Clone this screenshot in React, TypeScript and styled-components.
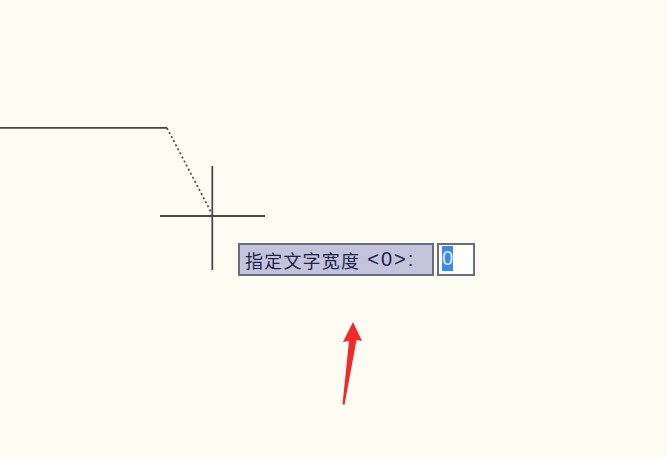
import React from "react";
import styled, { createGlobalStyle } from "styled-components";

const Global = createGlobalStyle`
  html, body { margin: 0; padding: 0; background: #fcfcf2; }
  #root { width: 667px; height: 457px; }
`;

const Canvas = styled.div`
  position: relative;
  width: 667px;
  height: 457px;
  background: #fcfcf2;
  overflow: hidden;
  font-family: "Noto Sans CJK SC", "Noto Sans", sans-serif;
`;

const Drawing = styled.svg`
  position: absolute;
  left: 0;
  top: 0;
`;

const Prompt = styled.div`
  position: absolute;
  left: 238px;
  top: 243px;
  display: flex;
  gap: 3px;
  height: 33px;
`;

const Label = styled.div`
  box-sizing: border-box;
  width: 196px;
  height: 33px;
  background: #c3c3dc;
  border: 2px solid #6c6c7c;
  display: flex;
  align-items: center;
  padding-left: 5px;
  color: #22224e;
  font-size: 18px;
  letter-spacing: 1.2px;
  white-space: nowrap;
`;

const Latin = styled.span`
  font-family: "Liberation Sans", Arial, sans-serif;
  font-size: 20px;
  margin-left: 7px;
  letter-spacing: 2px;
`;

const Field = styled.div`
  box-sizing: border-box;
  width: 38px;
  height: 33px;
  background: #ffffff;
  border: 2px solid #6c6c7c;
  padding: 1px 0 0 3px;
  display: flex;
`;

const Selected = styled.span`
  display: inline-flex;
  align-items: center;
  justify-content: center;
  width: 11px;
  height: 25px;
  background: #3a8ae6;
  color: #d8ecff;
  font-family: "Liberation Sans", Arial, sans-serif;
  font-size: 20px;
`;

export default function App() {
  return (
    <>
      <Global />
      <Canvas>
        <Drawing width="667" height="457" viewBox="0 0 667 457">
          <line x1="0" y1="127.8" x2="167" y2="127.8" stroke="#444" strokeWidth="1.8" />
          <line
            x1="167"
            y1="128"
            x2="212"
            y2="214"
            stroke="#4a4a4a"
            strokeWidth="1.7"
            strokeDasharray="2 2.6"
          />
          <line x1="160" y1="216" x2="265" y2="216" stroke="#4a4a4a" strokeWidth="1.8" />
          <line x1="212.3" y1="166" x2="212.3" y2="270" stroke="#4a4a4a" strokeWidth="1.8" />
          <polygon
            points="353,322 362,341 356.5,340 344.5,405 342.5,404 349,341 343,342"
            fill="#f02a2a"
          />
        </Drawing>
        <Prompt>
          <Label>
            指定文字宽度<Latin>&lt;0&gt;:</Latin>
          </Label>
          <Field>
            <Selected>0</Selected>
          </Field>
        </Prompt>
      </Canvas>
    </>
  );
}
